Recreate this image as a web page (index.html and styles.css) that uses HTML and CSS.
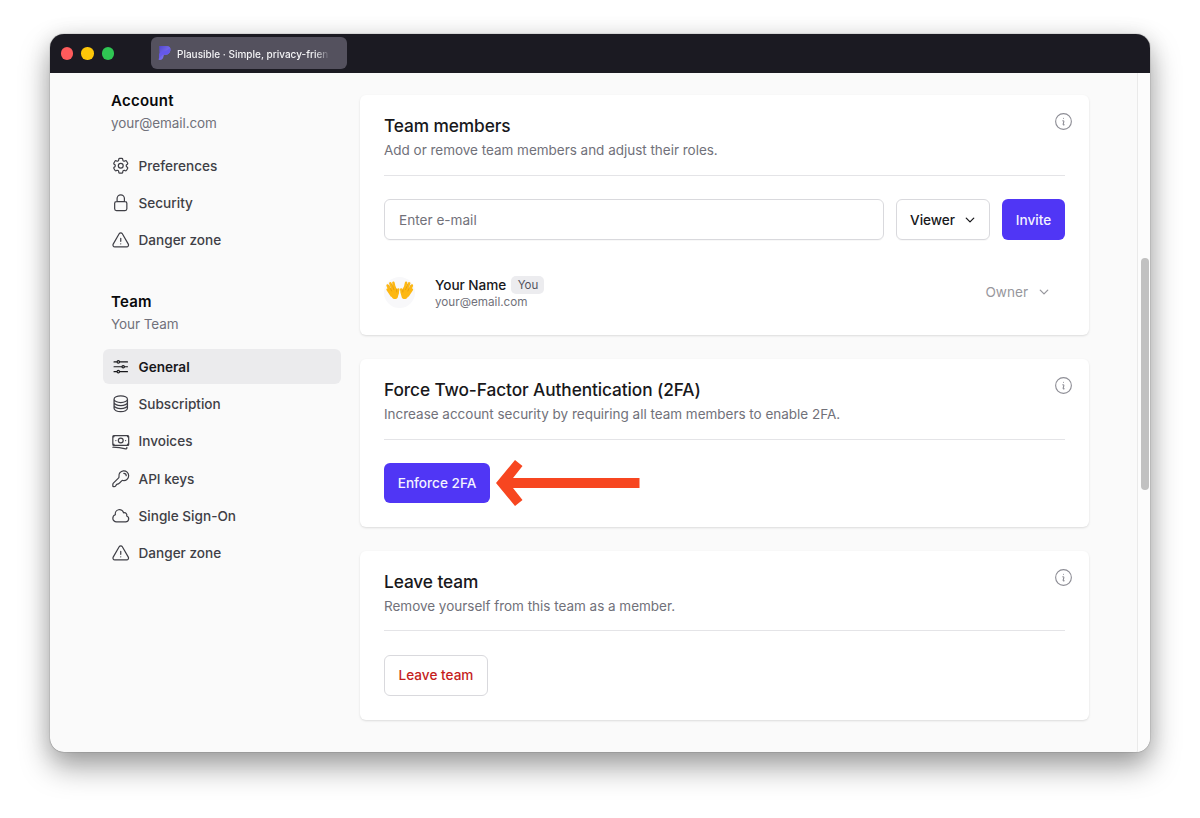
FILE: index.html
```html
<!DOCTYPE html>
<html lang="en">
<head>
<meta charset="utf-8">
<title>Plausible · Simple, privacy-friendly analytics</title>
<link rel="stylesheet" href="styles.css">
</head>
<body>
<svg class="defs" aria-hidden="true">
  <symbol id="warning" viewBox="0 0 24 24"><path d="M12 9v3.75m-9.303 3.376c-.866 1.5.217 3.374 1.948 3.374h14.71c1.73 0 2.813-1.874 1.948-3.374L13.949 3.378c-.866-1.5-3.032-1.5-3.898 0L2.697 16.126ZM12 15.75h.007v.008H12v-.008Z"/></symbol>
  <symbol id="info" viewBox="0 0 24 24"><path d="m11.25 11.25.041-.02a.75.75 0 0 1 1.063.852l-.708 2.836a.75.75 0 0 0 1.063.853l.041-.021M21 12a9 9 0 1 1-18 0 9 9 0 0 1 18 0Zm-9-3.75h.008v.008H12V8.250Z"/></symbol>
  <symbol id="chevron" viewBox="0 0 24 24"><path d="m19.500 8.250-7.500 7.500-7.500-7.500"/></symbol>
</svg>
<div class="window">
  <header class="titlebar">
    <div class="lights"><i class="light red"></i><i class="light yellow"></i><i class="light green"></i></div>
    <div class="tab">
      <svg class="logo" viewBox="0 0 13 16">
        <defs><linearGradient id="lg" x1="0" y1="0" x2="1" y2="1"><stop offset="0" stop-color="#5044cc"/><stop offset="1" stop-color="#9389ff"/></linearGradient></defs>
        <path fill="url(#lg)" d="M1.200 1H9C11.500 1 12.900 2.800 12.500 5.200 12 8 10 9.800 7.500 9.800H6L5.500 11.500C5 13.500 4 15 2 15H.7L1.500 8Z"/>
        <path fill="#6558ea" d="M1.300 8.800 4.500 5.800H8L12 3C13.200 6.500 10.500 9.800 7.500 9.800H4.500L1 13Z"/>
      </svg>
      <span class="tab-title">Plausible · Simple, privacy-frien</span>
    </div>
  </header>
  <div class="page">
    <aside class="sidebar">
      <section class="group">
        <h2>Account</h2>
        <p class="sub">your@email.com</p>
        <nav>
          <a class="item"><svg class="icon" viewBox="0 0 24 24"><path d="M9.594 3.940c.09-.542.56-.940 1.110-.940h2.593c.55 0 1.020.398 1.110.940l.213 1.281c.063.374.313.686.645.870.074.040.147.083.220.127.325.196.720.257 1.075.124l1.217-.456a1.125 1.125 0 0 1 1.370.490l1.296 2.247a1.125 1.125 0 0 1-.260 1.431l-1.003.827c-.293.241-.438.613-.430.992a7.723 7.723 0 0 1 0 .255c-.008.378.137.750.430.991l1.004.827c.424.350.534.955.260 1.430l-1.298 2.247a1.125 1.125 0 0 1-1.369.491l-1.217-.456c-.355-.133-.750-.072-1.076.124a6.470 6.470 0 0 1-.220.128c-.331.183-.581.495-.644.869l-.213 1.281c-.090.543-.560.940-1.110.940h-2.594c-.550 0-1.019-.398-1.110-.940l-.213-1.281c-.062-.374-.312-.686-.644-.870a6.520 6.520 0 0 1-.220-.127c-.325-.196-.720-.257-1.076-.124l-1.217.456a1.125 1.125 0 0 1-1.369-.490l-1.297-2.247a1.125 1.125 0 0 1 .260-1.431l1.004-.827c.292-.240.437-.613.430-.991a6.932 6.932 0 0 1 0-.255c.007-.380-.138-.751-.430-.992l-1.004-.827a1.125 1.125 0 0 1-.260-1.430l1.297-2.247a1.125 1.125 0 0 1 1.370-.491l1.216.456c.356.133.751.072 1.076-.124.072-.044.146-.086.220-.128.332-.183.582-.495.644-.869l.214-1.280Z"/><path d="M15 12a3 3 0 1 1-6 0 3 3 0 0 1 6 0Z"/></svg>Preferences</a>
          <a class="item"><svg class="icon" viewBox="0 0 24 24"><path d="M16.500 10.500V6.750a4.500 4.500 0 1 0-9 0v3.750m-.750 11.250h10.500a2.250 2.250 0 0 0 2.250-2.250v-6.750a2.250 2.250 0 0 0-2.250-2.250H6.750a2.250 2.250 0 0 0-2.250 2.250v6.750a2.250 2.250 0 0 0 2.250 2.250Z"/></svg>Security</a>
          <a class="item"><svg class="icon"><use href="#warning"/></svg>Danger zone</a>
        </nav>
      </section>
      <section class="group">
        <h2>Team</h2>
        <p class="sub">Your Team</p>
        <nav>
          <a class="item active"><svg class="icon" viewBox="0 0 24 24"><path d="M10.500 6h9.750M10.500 6a1.500 1.500 0 1 1-3 0m3 0a1.500 1.500 0 1 0-3 0M3.750 6H7.500m3 12h9.750m-9.750 0a1.500 1.500 0 0 1-3 0m3 0a1.500 1.500 0 0 0-3 0m-3.750 0H7.500m9-6h3.750m-3.750 0a1.500 1.500 0 0 1-3 0m3 0a1.500 1.500 0 0 0-3 0m-9.750 0h9.750"/></svg>General</a>
          <a class="item"><svg class="icon" viewBox="0 0 24 24"><path d="M20.250 6.375c0 2.278-3.694 4.125-8.250 4.125S3.750 8.653 3.750 6.375m16.500 0c0-2.278-3.694-4.125-8.250-4.125S3.750 4.097 3.750 6.375m16.500 0v11.250c0 2.278-3.694 4.125-8.250 4.125s-8.250-1.847-8.250-4.125V6.375m16.500 0v3.750m-16.500-3.750v3.750m16.500 0v3.750C20.250 16.153 16.556 18 12 18s-8.250-1.847-8.250-4.125v-3.750m16.500 0c0 2.278-3.694 4.125-8.250 4.125s-8.250-1.847-8.250-4.125"/></svg>Subscription</a>
          <a class="item"><svg class="icon" viewBox="0 0 24 24"><path d="M2.250 18.750a60.070 60.070 0 0 1 15.797 2.101c.727.198 1.453-.342 1.453-1.096V18.750M3.750 4.500v.750A.750.750 0 0 1 3 6h-.750m0 0v-.375c0-.621.504-1.125 1.125-1.125H20.250M2.250 6v9m18-10.500v.750c0 .414.336.750.750.750h.750m-1.500-1.500h.375c.621 0 1.125.504 1.125 1.125v9.750c0 .621-.504 1.125-1.125 1.125h-.375m1.500-1.500H21a.750.750 0 0 0-.750.750v.750m0 0H3.750m0 0h-.375a1.125 1.125 0 0 1-1.125-1.125V15m1.500 1.500v-.750A.750.750 0 0 0 3 15h-.750M15 10.500a3 3 0 1 1-6 0 3 3 0 0 1 6 0Zm3 0h.008v.008H18V10.500Zm-12 0h.008v.008H6V10.500Z"/></svg>Invoices</a>
          <a class="item"><svg class="icon" viewBox="0 0 24 24"><path d="M15.750 5.250a3 3 0 0 1 3 3m3 0a6 6 0 0 1-7.029 5.912c-.563-.097-1.159.026-1.563.430L10.500 17.250l-1.600 1.100-1.900.5-1.500 2.200c-.4.500-.9.700-1.500.7H3c-.450 0-.750-.300-.750-.750v-2.068c0-.597.237-1.170.659-1.591l6.499-6.499c.404-.404.527-1 .430-1.563A6 6 0 1 1 21.750 8.250Z"/></svg>API keys</a>
          <a class="item"><svg class="icon" viewBox="0 0 24 24"><path d="M2.250 15a4.500 4.500 0 0 0 4.500 4.500H18a3.750 3.750 0 0 0 1.332-7.257 3 3 0 0 0-3.758-3.848 5.250 5.250 0 0 0-10.233 2.330A4.502 4.502 0 0 0 2.250 15Z"/></svg>Single Sign-On</a>
          <a class="item"><svg class="icon"><use href="#warning"/></svg>Danger zone</a>
        </nav>
      </section>
    </aside>
    <main class="cards">
      <section class="card members">
        <div class="head">
          <div><h1>Team members</h1><p class="desc">Add or remove team members and adjust their roles.</p></div>
          <svg class="info"><use href="#info"/></svg>
        </div>
        <div class="invite">
          <div class="field">Enter e-mail</div>
          <div class="select">Viewer<svg class="chev"><use href="#chevron"/></svg></div>
          <div class="btn primary invite-btn">Invite</div>
        </div>
        <div class="member">
          <div class="avatar">
            <svg viewBox="0 0 32 32">
              <g id="hand" fill="#fdb813" stroke="#fdb813" stroke-linecap="round">
                <path stroke="none" d="M4.500 12 11.500 9.500 13 12.500C15 13.500 15.300 15 14.500 17.500L13.700 20.500C12.500 22.500 9.500 22.600 8 20.500Z"/>
                <path stroke-width="2.500" d="m3.600 8.500 3.500 8M3.600 12.500l4 6M6.300 6.300l3 8M9.400 5.800l1.800 8M14.300 12.500l-1 4"/>
                <path fill="none" stroke="#dc9208" stroke-width=".6" d="m5.100 8.500 2.500 5.500M7.900 7.200l2 5.500M12.500 12l.2 3"/>
              </g>
              <use href="#hand" transform="matrix(-1 0 0 1 31.500 0)"/>
            </svg>
          </div>
          <div class="who">
            <div class="name">Your Name<span class="badge">You</span></div>
            <div class="mail">your@email.com</div>
          </div>
          <div class="role">Owner<svg class="chev"><use href="#chevron"/></svg></div>
        </div>
      </section>
      <section class="card force">
        <div class="head">
          <div><h1>Force Two-Factor Authentication (2FA)</h1><p class="desc">Increase account security by requiring all team members to enable 2FA.</p></div>
          <svg class="info"><use href="#info"/></svg>
        </div>
        <div class="actions">
          <div class="btn primary enforce">Enforce 2FA</div>
          <svg class="arrow" viewBox="0 0 144 46"><path d="M19 0 26.500 6 17 18H143.500V28H17L26.500 40 19 46 0 23Z"/></svg>
        </div>
      </section>
      <section class="card leave">
        <div class="head">
          <div><h1>Leave team</h1><p class="desc">Remove yourself from this team as a member.</p></div>
          <svg class="info"><use href="#info"/></svg>
        </div>
        <div class="actions"><div class="btn danger">Leave team</div></div>
      </section>
    </main>
    <div class="scroll"><div class="thumb"></div></div>
  </div>
</div>
</body>
</html>
```
FILE: styles.css
```css
* { box-sizing: border-box; }
body {
  margin: 0; height: 818px; padding: 34px 50px 0; overflow: hidden;
  background: #fff; color: #18181b;
  font-family: Inter, "Liberation Sans", sans-serif;
  font-size: 13.600px;
}
h1, h2, p { margin: 0; }
.defs { display: none; }
.window {
  width: 1100px; height: 718px; border-radius: 14px; overflow: hidden;
  background: #fafafa; display: flex; flex-direction: column;
  box-shadow: 0 0 1px rgba(0,0,0,.75), 0 15px 30px rgba(0,0,0,.36), 0 2px 22px rgba(0,0,0,.1);
}
.titlebar {
  height: 38.500px; flex: none; background: #1b1a22; display: flex; align-items: center;
  padding-left: 10.500px;
}
.lights { display: flex; gap: 8px; width: 90.500px; flex: none; }
.light { width: 12.500px; height: 12.500px; border-radius: 50%; }
.red { background: #fe5b5c; }
.yellow { background: #fdc709; }
.green { background: #2fc653; }
.tab {
  width: 196px; height: 32px; border-radius: 6px; background: #54515e;
  display: flex; align-items: center; padding-left: 7px; gap: 6px;
}
.logo { width: 13px; height: 16px; flex: none; }
.tab-title {
  width: 160px; white-space: nowrap; color: #f4f4f6; padding-top: 1px;
  font-size: 10px; font-weight: 500; letter-spacing: 0; line-height: 16px;
  mask-image: linear-gradient(to right, #000 138px, transparent 153px);
}
.page { flex: 1; display: flex; min-height: 0; }
.sidebar { width: 238px; margin-left: 53px; padding-top: 17.500px; flex: none; }
.group { height: 201px; }
.group h2 { font-size: 15px; letter-spacing: .25px; line-height: 21px; font-weight: 600; color: #09090b; padding-left: 8px; }
.sub { color: #71717a; padding: .5px 0 0 8px; line-height: 22px; font-size: 13.500px; letter-spacing: -.07px; }
.group nav { display: flex; flex-direction: column; gap: 2.400px; margin-top: 14.500px; }
.item {
  height: 35px; border-radius: 6px; display: flex; align-items: center; gap: 8.500px;
  padding-left: 8px; font-weight: 500; color: #3f3f46;
}
.item.active { background: #ebebed; color: #18181b; font-weight: 600; }
svg { fill: none; stroke: currentColor; stroke-width: 1.500; stroke-linecap: round; stroke-linejoin: round; }
.logo, .arrow { stroke: none; }
.icon { width: 19.500px; height: 19.500px; flex: none; margin-right: -.5px; }
.cards { width: 729px; margin-left: 19px; padding-top: 22.500px; display: flex; flex-direction: column; gap: 24px; }
.card {
  background: #fff; border-radius: 6px; padding: 17px 24px 0; flex: none;
  box-shadow: 0 1px 3px rgba(0,0,0,.07), 0 1px 2px rgba(0,0,0,.06);
}
.members { height: 240px; }
.force { height: 167.500px; }
.leave { height: 169px; }
.head { display: flex; justify-content: space-between; height: 63.500px; border-bottom: 1px solid #e4e4e7; }
.head h1 { font-size: 17.300px; letter-spacing: -.1px; line-height: 27px; font-weight: 500; color: #18181b; }
.desc { color: #71717a; line-height: 22px; font-size: 13.500px; letter-spacing: -.02px; }
.info { width: 21px; height: 21px; color: #8e8e96; margin: -1px -9px 0 0; stroke-width: 1.300; }
.invite { display: flex; gap: 12px; margin-top: 23.500px; }
.field, .select { border: 1px solid #d9d9dd; border-radius: 6px; height: 41px; display: flex; align-items: center; box-shadow: 0 1px 1px rgba(0,0,0,.03); }
.field { flex: 1; padding-left: 14px; color: #71717a; }
.select { width: 94px; padding-left: 13px; gap: 9px; font-weight: 500; }
.chev { width: 12px; height: 12px; stroke-width: 2.600; flex: none; }
.btn { display: flex; align-items: center; justify-content: center; border-radius: 6px; font-weight: 500; }
.primary { background: #5036f5; color: #f4f2ff; }
.invite-btn { width: 63px; height: 41px; }
.member { display: flex; margin-top: 34.500px; height: 36px; align-items: center; }
.avatar { width: 31px; height: 31px; border-radius: 50%; background: #f8f8fa; margin-top: -1px; }
.avatar svg { display: block; width: 32px; height: 32px; }
.who { margin-left: 20px; flex: 1; }
.name { display: flex; align-items: center; gap: 5px; font-weight: 500; line-height: 18px; letter-spacing: -.05px; }
.badge { background: #ececef; border-radius: 5px; color: #52525b; font-weight: 400; font-size: 11.500px; padding: 0 5.500px 0 6.500px; }
.mail { color: #71717a; font-size: 11.700px; line-height: 16px; }
.role { color: #97979d; display: flex; align-items: center; gap: 10px; margin: -2px 15px 0 0; }
.actions { display: flex; margin-top: 23.500px; }
.enforce { width: 106px; height: 39.500px; }
.arrow { width: 144px; height: 46px; fill: #f74620; margin: -3px 0 0 5.500px; }
.danger { width: 104px; height: 41px; border: 1px solid #d9d9dd; color: #c51d1d; }
.scroll { margin-left: auto; width: 13px; border-left: 1px solid #eaeaea; background: #fcfcfc; padding: 185px 0 0 3px; }
.thumb { width: 7.500px; height: 232px; border-radius: 4px; background: #c1c1c1; }
```
